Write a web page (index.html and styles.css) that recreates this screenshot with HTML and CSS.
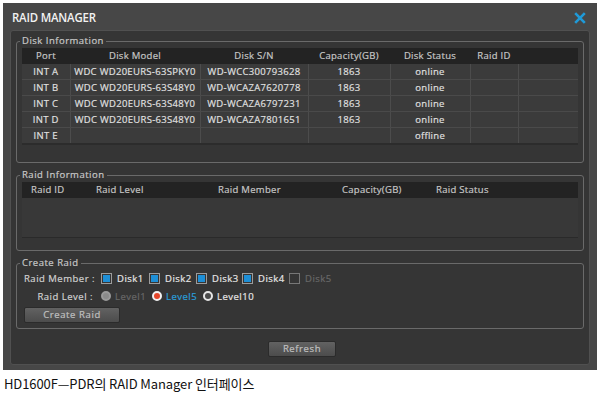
FILE: index.html
```html
<!DOCTYPE html>
<html>
<head>
<meta charset="utf-8">
<link rel="stylesheet" href="styles.css">
</head>
<body>
<div class="window">
  <div class="titlebar">
    <span class="title">RAID MANAGER</span>
    <svg class="close" width="12" height="12" viewBox="0 0 12 12"><path d="M1.2 1.2 L10.8 10.8 M10.8 1.2 L1.2 10.8" stroke="#1f9ad8" stroke-width="2.6" stroke-linecap="butt" fill="none"/></svg>
  </div>
  <div class="panel">
    <fieldset class="group disk">
      <legend>Disk Information</legend>
      <table class="grid disk-grid">
        <colgroup><col class="c-port"><col class="c-model"><col class="c-sn"><col class="c-cap"><col class="c-status"><col class="c-rid"><col class="c-extra"></colgroup>
        <thead><tr><th>Port</th><th>Disk Model</th><th>Disk S/N</th><th>Capacity(GB)</th><th>Disk Status</th><th>Raid ID</th><th></th></tr></thead>
        <tbody>
          <tr><td>INT A</td><td>WDC WD20EURS-63SPKY0</td><td>WD-WCC300793628</td><td>1863</td><td>online</td><td></td><td></td></tr>
          <tr><td>INT B</td><td>WDC WD20EURS-63S48Y0</td><td>WD-WCAZA7620778</td><td>1863</td><td>online</td><td></td><td></td></tr>
          <tr><td>INT C</td><td>WDC WD20EURS-63S48Y0</td><td>WD-WCAZA6797231</td><td>1863</td><td>online</td><td></td><td></td></tr>
          <tr><td>INT D</td><td>WDC WD20EURS-63S48Y0</td><td>WD-WCAZA7801651</td><td>1863</td><td>online</td><td></td><td></td></tr>
          <tr><td>INT E</td><td></td><td></td><td></td><td>offline</td><td></td><td></td></tr>
        </tbody>
      </table>
    </fieldset>
    <fieldset class="group raid">
      <legend>Raid Information</legend>
      <table class="grid raid-grid">
        <colgroup><col class="r-id"><col class="r-level"><col class="r-member"><col class="r-cap"><col class="r-status"></colgroup>
        <thead><tr><th>Raid ID</th><th>Raid Level</th><th>Raid Member</th><th>Capacity(GB)</th><th>Raid Status</th></tr></thead>
        <tbody><tr class="empty"><td></td><td></td><td></td><td></td><td></td></tr></tbody>
      </table>
    </fieldset>
    <fieldset class="group create">
      <legend>Create Raid</legend>
      <div class="opt-row members">
        <span class="opt-label">Raid Member :</span>
        <span class="opt"><span class="check on"></span>Disk1</span>
        <span class="opt"><span class="check on"></span>Disk2</span>
        <span class="opt"><span class="check on"></span>Disk3</span>
        <span class="opt"><span class="check on"></span>Disk4</span>
        <span class="opt dim"><span class="check"></span>Disk5</span>
      </div>
      <div class="opt-row levels">
        <span class="opt-label">Raid Level :</span>
        <span class="opt dim"><span class="radio disabled"></span>Level1</span>
        <span class="opt sel"><span class="radio selected"></span>Level5</span>
        <span class="opt"><span class="radio"></span>Level10</span>
      </div>
      <button class="btn create-btn">Create Raid</button>
    </fieldset>
    <div class="footer">
      <button class="btn refresh-btn">Refresh</button>
    </div>
  </div>
</div>
<p class="caption">HD1600F—PDR의 RAID Manager 인터페이스</p>
</body>
</html>
```
FILE: styles.css
```css
html, body {
  margin: 0;
  padding: 0;
  background: #ffffff;
}
body {
  width: 600px;
  height: 399px;
  overflow: hidden;
  font-family: "Open Sans", "DejaVu Sans", sans-serif;
}
.window {
  margin: 3px 0 0 3px;
  width: 594px;
  height: 367px;
  background: #474747;
  display: flex;
  flex-direction: column;
  box-sizing: border-box;
}
.titlebar {
  height: 27px;
  flex: none;
  display: flex;
  align-items: center;
  justify-content: space-between;
  padding: 1px 11px 0 9px;
  box-sizing: border-box;
}
.title {
  color: #f2f2f2;
  font-size: 12px;
  font-weight: 600;
  letter-spacing: -0.2px;
  transform: scaleX(0.95);
  transform-origin: left center;
}
.close {
  display: block;
  margin-top: 2px;
}
.panel {
  margin: 0 7px 5px 7px;
  flex: 1;
  border: 1px solid #505050;
  border-radius: 3px;
  background: #353535;
  padding: 4px 5px 0 5px;
  box-sizing: border-box;
  display: flex;
  flex-direction: column;
}
.group {
  margin: 0;
  border: 1px solid #6a6a6a;
  border-radius: 3px;
  padding: 1px 5px 17px 5px;
  min-width: 0;
}
.group legend {
  font-size: 9.5px;
  line-height: 12px;
  font-weight: 400;
  color: #c8c8c8;
  padding: 0 2px;
  margin-left: -2px;
  letter-spacing: 0.5px;
  -webkit-text-stroke: 0.2px #c8c8c8;
}
.raid {
  margin-top: 6px;
  padding-bottom: 12px;
}
.create {
  margin-top: 6px;
  padding: 1px 5px 5px 5px;
}
.grid {
  width: 100%;
  border-collapse: collapse;
  table-layout: fixed;
  font-size: 9.5px;
  font-weight: 400;
  letter-spacing: 0.3px;
}
.grid th {
  height: 16px;
  padding: 0;
  background: #232323;
  color: #c6c6c6;
  font-weight: 400;
  line-height: 16px;
  -webkit-text-stroke: 0.2px #c6c6c6;
}
.grid td {
  height: 15px;
  padding: 0;
  line-height: 15px;
  color: #e2e2e2;
  background: #3b3b3b;
  border-right: 1px solid #4c4c4c;
  border-bottom: 1px solid #4a4a4a;
  text-align: center;
  white-space: nowrap;
  overflow: hidden;
  -webkit-text-stroke: 0.15px #e2e2e2;
}
.grid td:last-child {
  border-right: none;
}
.disk-grid tbody tr:last-child td {
  border-bottom: 2px solid #2c2c2c;
}
.c-port { width: 48px; }
.c-model { width: 130px; }
.c-sn { width: 108px; }
.c-cap { width: 82px; }
.c-status { width: 80px; }
.c-rid { width: 48px; }
.c-extra { width: 60px; }

.r-id { width: 65px; }
.r-level { width: 122px; }
.r-member { width: 124px; }
.r-cap { width: 94px; }
.r-status { width: 151px; }
.raid-grid th {
  text-align: left;
  padding-left: 9px;
}
.raid-grid .empty td {
  height: 39px;
  background: #383838;
  border-right: none;
  border-bottom: 1px solid #2a2a2a;
}

.opt-row {
  display: grid;
  align-items: center;
  height: 14px;
  margin-left: 2px;
  font-size: 9.5px;
  font-weight: 400;
  letter-spacing: 0.5px;
  color: #e6e6e6;
  -webkit-text-stroke: 0.2px currentColor;
  white-space: nowrap;
}
.members {
  margin-top: 1px;
  grid-template-columns: 77px 48px 47px 46px 47px auto;
}
.levels {
  margin-top: 4px;
  grid-template-columns: 77px 51px 51px auto;
}
.opt-label {
  text-align: right;
  padding-right: 8px;
  color: #d0d0d0;
  white-space: nowrap;
}
.opt {
  display: flex;
  align-items: center;
  white-space: nowrap;
}
.opt.dim { color: #686868; }
.opt.sel { color: #2a9fdb; }
.check {
  width: 7px;
  height: 7px;
  border: 1px solid #9c9c9c;
  padding: 1px;
  background: #1e8fd6;
  background-clip: content-box;
  margin-right: 5px;
  flex: none;
}
.check:not(.on) {
  background: transparent;
  border-color: #777;
}
.radio {
  width: 6px;
  height: 6px;
  border-radius: 50%;
  border: 2px solid #e6e6e6;
  background: #4a4a4a;
  margin-right: 4px;
  flex: none;
}
.radio.disabled {
  background: #8a8a8a;
  border-color: #9a9a9a;
}
.radio.selected {
  background: #e5462a;
  border-color: #f2f2f2;
}
.btn {
  display: block;
  height: 16px;
  padding: 0;
  border: 1px solid #2b2b2b;
  border-radius: 2px;
  background: linear-gradient(#626262, #4c4c4c);
  color: #c0c0c0;
  font-family: "Open Sans", "DejaVu Sans", sans-serif;
  font-size: 9.5px;
  font-weight: 400;
  letter-spacing: 0.6px;
  line-height: 14px;
  box-sizing: border-box;
  -webkit-text-stroke: 0.2px #c0c0c0;
}
.create-btn {
  width: 96px;
  margin: 4px 0 0 2px;
}
.footer {
  display: flex;
  justify-content: center;
  padding-top: 12px;
}
.refresh-btn {
  width: 68px;
  margin-left: 4px;
}
.caption {
  margin: 6px 0 0 4px;
  font-family: "Noto Sans CJK KR", "Noto Sans", sans-serif;
  font-size: 13px;
  line-height: 16px;
  letter-spacing: -0.1px;
  color: #111;
}
```
